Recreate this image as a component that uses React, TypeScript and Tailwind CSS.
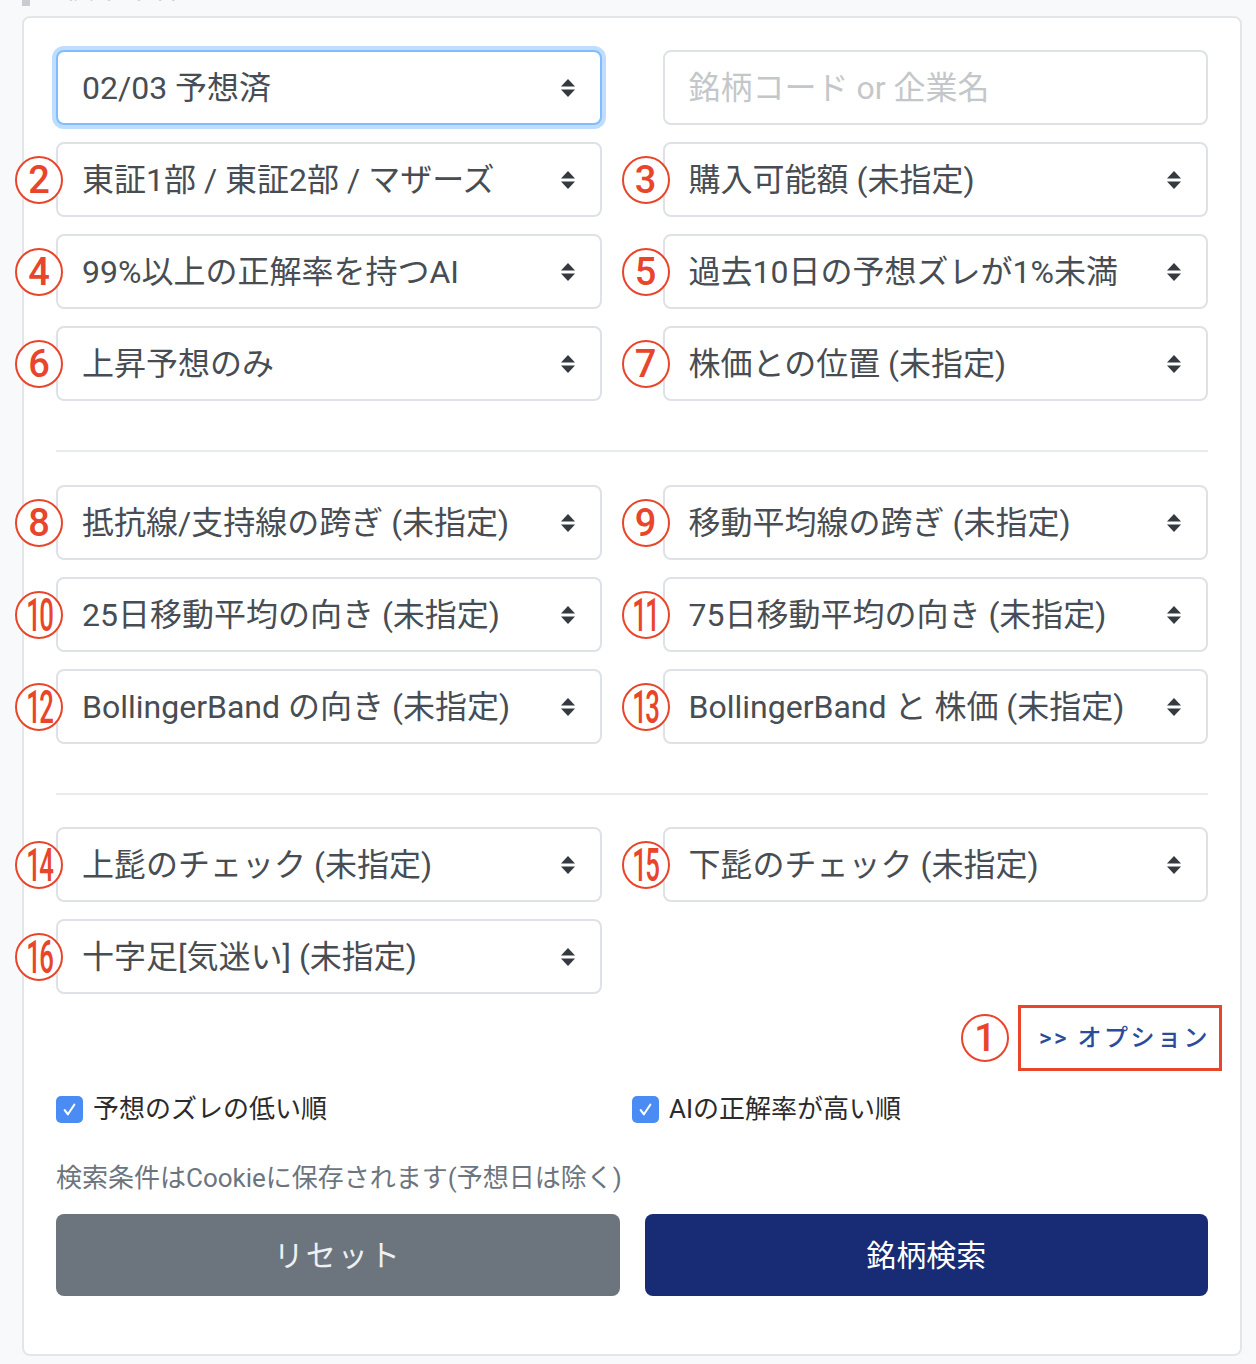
import type { ReactNode } from 'react'

const FONT = { fontFamily: 'Roboto, "Noto Sans CJK JP", sans-serif' }

function Mark({ n, className = '' }: { n: number; className?: string }) {
  const two = n >= 10
  return (
    <span
      className={`flex h-[48px] w-[48px] shrink-0 items-center justify-center rounded-full border-[2.5px] border-[#e8452a] bg-white text-[#e8452a] ${className}`}
      style={{ fontFamily: 'Roboto, "Liberation Sans", sans-serif' }}
    >
      {two ? (
        <span className="inline-block scale-x-[0.56] text-[46px] font-medium leading-none tracking-[-3px]">{n}</span>
      ) : (
        <span className="text-[38px] font-medium leading-none">{n}</span>
      )}
    </span>
  )
}

function Chevron() {
  return (
    <svg width="16" height="20" viewBox="0 0 16 20" className="shrink-0">
      <polygon points="1,8.5 8,1 15,8.5" fill="#343a40" />
      <polygon points="1,11.5 15,11.5 8,19" fill="#343a40" />
    </svg>
  )
}

function Select({ label, n, focus }: { label: string; n?: number; focus?: boolean }) {
  return (
    <div className="relative">
      <div
        className={`flex h-[75px] items-center justify-between rounded-[8px] border-2 bg-white pl-[24px] pr-[24px] text-[32px] text-[#474d53] ${
          focus ? 'border-[#80bdff] shadow-[0_0_0_4px_rgba(0,123,255,0.25)]' : 'border-[#dee2e6]'
        }`}
      >
        <span className="whitespace-nowrap">{label}</span>
        <Chevron />
      </div>
      {n !== undefined && <Mark n={n} className="absolute left-[-41px] top-1/2 -translate-y-1/2" />}
    </div>
  )
}

function Grid({ children }: { children: ReactNode }) {
  return <div className="grid grid-cols-2 gap-x-[61px] gap-y-[17px]">{children}</div>
}

function Check({ label }: { label: string }) {
  return (
    <label className="flex items-center gap-[10px] text-[26px] leading-[39px] text-[#2b2b2b]">
      <span className="flex h-[27px] w-[27px] items-center justify-center rounded-[5px] bg-[#4a8cf3]">
        <svg width="17" height="17" viewBox="0 0 16 16">
          <path d="M3.5 8.5 L6.5 12.5 L12.5 3.5" stroke="white" strokeWidth="2" fill="none" strokeLinecap="round" strokeLinejoin="round" />
        </svg>
      </span>
      {label}
    </label>
  )
}

export default function App() {
  return (
    <div className="min-h-[1364px] w-[1256px] bg-[#f8f9fa]" style={FONT}>
      <div className="h-[16px] overflow-hidden pl-[22px]">
        <div className="-mt-[30px] flex items-start gap-[34px]">
          <span className="h-[36px] w-[8px] bg-[#c9ccd0]" />
          <span className="text-[30px] leading-[34px] text-[#555]">検索条件</span>
        </div>
      </div>

      <div className="ml-[22px] w-[1220px] rounded-[8px] border-2 border-[#e3e6e9] bg-white px-[32px] pb-[58px] pt-[32px]">
        <Grid>
          <Select label="02/03 予想済" focus />
          <div className="flex h-[75px] items-center rounded-[8px] border-2 border-[#dee2e6] bg-white pl-[24px] text-[32px] text-[#c4c7ca]">
            銘柄コード or 企業名
          </div>
          <Select label="東証1部 / 東証2部 / マザーズ" n={2} />
          <Select label="購入可能額 (未指定)" n={3} />
          <Select label="99%以上の正解率を持つAI" n={4} />
          <Select label="過去10日の予想ズレが1%未満" n={5} />
          <Select label="上昇予想のみ" n={6} />
          <Select label="株価との位置 (未指定)" n={7} />
        </Grid>

        <hr className="mb-[33px] mt-[49px] h-[2px] border-0 bg-[#e9ecef]" />

        <Grid>
          <Select label="抵抗線/支持線の跨ぎ (未指定)" n={8} />
          <Select label="移動平均線の跨ぎ (未指定)" n={9} />
          <Select label="25日移動平均の向き (未指定)" n={10} />
          <Select label="75日移動平均の向き (未指定)" n={11} />
          <Select label="BollingerBand の向き (未指定)" n={12} />
          <Select label="BollingerBand と 株価 (未指定)" n={13} />
        </Grid>

        <hr className="mb-[32px] mt-[49px] h-[2px] border-0 bg-[#e9ecef]" />

        <Grid>
          <Select label="上髭のチェック (未指定)" n={14} />
          <Select label="下髭のチェック (未指定)" n={15} />
          <Select label="十字足[気迷い] (未指定)" n={16} />
        </Grid>

        <div className="-mr-[14px] mt-[11px] flex items-center justify-end gap-[9px]">
          <Mark n={1} />
          <a className="flex h-[66px] w-[204px] items-center border-[3px] border-[#e8452a] pl-[18px] text-[24px] font-medium tracking-[2.5px] text-[#2b4c9b]">
            &gt;&gt; オプション
          </a>
        </div>

        <div className="mt-[19px] grid grid-cols-2">
          <Check label="予想のズレの低い順" />
          <Check label="AIの正解率が高い順" />
        </div>

        <p className="mt-[30px] text-[26px] leading-[39px] text-[#6c757d]">
          検索条件はCookieに保存されます(予想日は除く)
        </p>

        <div className="mt-[16px] grid grid-cols-2 gap-[25px]">
          <button className="h-[82px] rounded-[8px] bg-[#6c757d] text-[30px] tracking-[2px] text-[#eef0f2]">リセット</button>
          <button className="h-[82px] rounded-[8px] bg-[#172c75] text-[30px] text-white">銘柄検索</button>
        </div>
      </div>
    </div>
  )
}
